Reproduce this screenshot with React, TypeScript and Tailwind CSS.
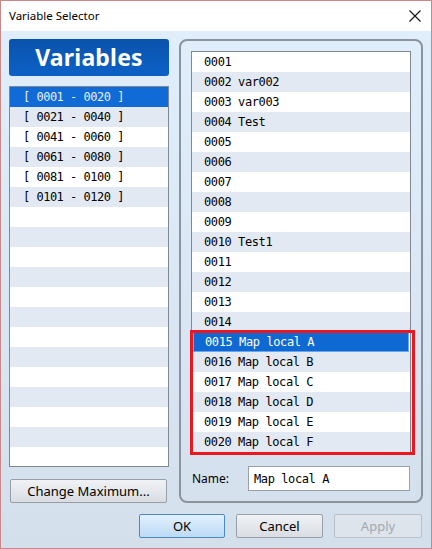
import React from "react";

const mono = { fontFamily: '"DejaVu Sans Mono", monospace' } as const;
const ui = { fontFamily: '"Noto Sans", "Open Sans", sans-serif' } as const;

const ranges = [
  "[ 0001 - 0020 ]",
  "[ 0021 - 0040 ]",
  "[ 0041 - 0060 ]",
  "[ 0061 - 0080 ]",
  "[ 0081 - 0100 ]",
  "[ 0101 - 0120 ]",
];

const vars: string[] = [
  "0001",
  "0002 var002",
  "0003 var003",
  "0004 Test",
  "0005",
  "0006",
  "0007",
  "0008",
  "0009",
  "0010 Test1",
  "0011",
  "0012",
  "0013",
  "0014",
  "0015 Map local A",
  "0016 Map local B",
  "0017 Map local C",
  "0018 Map local D",
  "0019 Map local E",
  "0020 Map local F",
];

export default function App() {
  const leftRows = Array.from({ length: 19 }, (_, i) => i);
  return (
    <div
      className="w-[432px] h-[549px] border border-[#c98787] flex flex-col overflow-hidden"
      style={ui}
    >
      {/* Title bar */}
      <div className="h-[30px] bg-white flex items-center justify-between pl-[8px] pr-[8px] shrink-0">
        <span className="text-[11.5px] text-black leading-none">Variable Selector</span>
        <svg width="12" height="12" viewBox="0 0 12 12" className="mr-[2px]">
          <path d="M0.5 0.5 L11.5 11.5 M11.5 0.5 L0.5 11.5" stroke="#111" strokeWidth="1.1" />
        </svg>
      </div>

      {/* Body */}
      <div className="flex-1 bg-gradient-to-b from-[#e0eefc] to-[#d4dfec] pt-[8px] px-[8px] flex flex-col">
        <div className="flex gap-[10px] h-[464px]">
          {/* Left column */}
          <div className="w-[160px] flex flex-col">
            <div className="h-[37px] rounded-[3px] bg-gradient-to-b from-[#0a53ac] to-[#0c61c6] flex items-center justify-center">
              <span className="text-white text-[23px] font-bold leading-none tracking-[0.2px]">Variables</span>
            </div>
            <div className="mt-[10px] h-[381px] border border-[#82888f] bg-white overflow-hidden">
              {leftRows.map((i) => {
                const sel = i === 0;
                const bg = sel ? "bg-[#106bd6] text-[#e6f0ff]" : i % 2 === 1 ? "bg-[#e3e9f3] text-black" : "bg-white text-black";
                return (
                  <div
                    key={i}
                    className={`h-[20px] flex items-center pl-[13px] text-[12px] tracking-[-0.5px] whitespace-pre ${bg}`}
                    style={mono}
                  >
                    {ranges[i] ?? ""}
                  </div>
                );
              })}
            </div>
            <button className="mt-[12px] ml-[1px] w-[157px] h-[24px] rounded-[2px] border border-[#9a9fa6] bg-gradient-to-b from-[#f0f2f5] to-[#d9dde3] text-[13px] text-black flex items-center justify-center leading-none">
              Change Maximum...
            </button>
          </div>

          {/* Right group box */}
          <div className="w-[244px] h-[464px] rounded-[8px] border-2 border-[#8c939b] px-[10px] pt-[10px] flex flex-col">
            <div className="relative h-[402px] border border-[#82888f] bg-white">
              {vars.map((v, i) => {
                const sel = i === 14;
                const bg = sel
                  ? "bg-[#0f69d3] text-white border border-[#6aa6ea] mx-[1px]"
                  : i % 2 === 1
                  ? "bg-[#e3e9f3] text-black"
                  : "bg-white text-black";
                return (
                  <div
                    key={i}
                    className={`h-[20px] flex items-center ${sel ? "pl-[11px]" : "pl-[12px]"} text-[12px] tracking-[-0.4px] whitespace-pre ${bg}`}
                    style={mono}
                  >
                    {v}
                  </div>
                );
              })}
              <div className="absolute left-[-2px] top-[278px] w-[225px] h-[125px] border-[3px] border-[#ea1620] pointer-events-none" />
            </div>
            <div className="mt-[13px] flex items-center h-[25px]">
              <span className="text-[12px] text-black w-[57px] pl-[1px] leading-none">Name:</span>
              <div
                className="w-[162px] h-[25px] border border-[#9aa0a7] bg-white flex items-center pl-[5px] text-[12px] tracking-[-0.4px] text-black"
                style={mono}
              >
                Map local A
              </div>
            </div>
          </div>
        </div>

        {/* Bottom buttons */}
        <div className="flex justify-end gap-[11px] mt-[11px] pr-[1px]">
          <button className="w-[86px] h-[24px] rounded-[2px] border border-[#4a8ac4] bg-gradient-to-b from-[#e3f0fd] to-[#bcdaf6] text-[13px] text-black leading-none">
            OK
          </button>
          <button className="w-[87px] h-[24px] rounded-[2px] border border-[#9a9fa6] bg-gradient-to-b from-[#f0f2f5] to-[#d9dde3] text-[13px] text-black leading-none">
            Cancel
          </button>
          <button className="w-[88px] h-[24px] rounded-[2px] border border-[#b9c0c8] bg-[#dde4ec] text-[13px] text-[#a3a9b0] leading-none">
            Apply
          </button>
        </div>
      </div>
    </div>
  );
}
